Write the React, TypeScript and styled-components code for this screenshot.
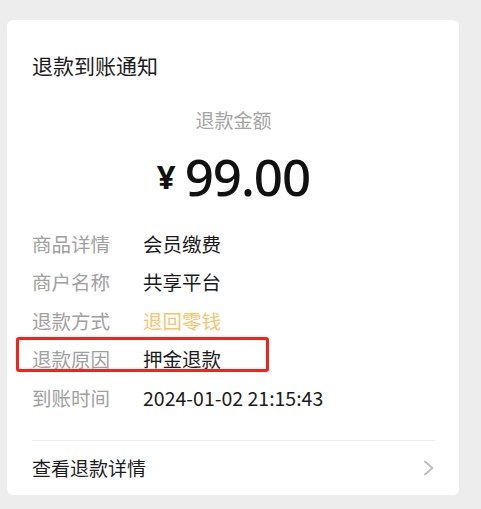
import React from 'react';
import styled, { createGlobalStyle } from 'styled-components';

const GlobalStyle = createGlobalStyle`
  html, body {
    margin: 0;
    padding: 0;
    background: #ededed;
  }
  body {
    font-family: 'Noto Sans CJK SC', 'Noto Sans', sans-serif;
    -webkit-font-smoothing: antialiased;
  }
`;

const Page = styled.div`
  padding: 20px 22px 14px 7px;
`;

const Card = styled.div`
  background: #fff;
  border-radius: 6px;
  height: 475px;
  box-sizing: border-box;
  padding: 30px 24px 0 25px;
  display: flex;
  flex-direction: column;
`;

const Title = styled.div`
  font-size: 21px;
  line-height: 30px;
  color: #1b1b1b;
`;

const AmountLabel = styled.div`
  margin-top: 27px;
  font-size: 19px;
  line-height: 26px;
  color: #a3a3a3;
  text-align: center;
`;

const Amount = styled.div`
  margin-top: 13px;
  height: 60px;
  display: flex;
  align-items: center;
  justify-content: center;
  color: #111;
`;

const Currency = styled.span`
  font-family: 'Noto Sans', sans-serif;
  font-size: 33px;
  font-weight: 700;
  margin-right: 9px;
  margin-top: 0;
`;

const Digits = styled.span`
  font-family: 'Noto Sans', sans-serif;
  font-size: 51px;
  font-weight: 500;
  letter-spacing: -1px;
`;

const Rows = styled.div`
  margin-top: 18px;
  display: flex;
  flex-direction: column;
`;

const Row = styled.div<{ $marked?: boolean }>`
  position: relative;
  display: flex;
  align-items: center;
  height: 38.5px;
  font-size: 19.5px;

  ${({ $marked }) =>
    $marked &&
    `
    &::after {
      content: '';
      position: absolute;
      left: -16px;
      top: -3px;
      width: 253px;
      height: 35px;
      border: 3px solid #f5211a;
      border-radius: 3px;
      box-sizing: border-box;
    }
  `}
`;

const Label = styled.span`
  width: 111px;
  flex-shrink: 0;
  color: #a0a0a0;
`;

const Value = styled.span<{ $accent?: boolean }>`
  color: ${({ $accent }) => ($accent ? '#f7c46d' : '#1b1b1b')};
`;

const Divider = styled.div`
  margin-top: 23px;
  height: 1px;
  background: #efefef;
`;

const Footer = styled.div`
  flex: 1;
  display: flex;
  align-items: center;
  justify-content: space-between;
  font-size: 19px;
  color: #1b1b1b;
`;

const Chevron = styled.svg`
  width: 12px;
  height: 16px;
`;

const rows = [
  { label: '商品详情', value: '会员缴费' },
  { label: '商户名称', value: '共享平台' },
  { label: '退款方式', value: '退回零钱', accent: true },
  { label: '退款原因', value: '押金退款', marked: true },
  { label: '到账时间', value: '2024-01-02 21:15:43' },
];

export default function App() {
  return (
    <Page>
      <GlobalStyle />
      <Card>
        <Title>退款到账通知</Title>
        <AmountLabel>退款金额</AmountLabel>
        <Amount>
          <Currency>¥</Currency>
          <Digits>99.00</Digits>
        </Amount>
        <Rows>
          {rows.map((r) => (
            <Row key={r.label} $marked={r.marked}>
              <Label>{r.label}</Label>
              <Value $accent={r.accent}>{r.value}</Value>
            </Row>
          ))}
        </Rows>
        <Divider />
        <Footer>
          <span>查看退款详情</span>
          <Chevron viewBox="0 0 12 16" fill="none">
            <path d="M2 1.5 L9.5 8 L2 14.5" stroke="#bdbdbd" strokeWidth="1.8" strokeLinecap="round" strokeLinejoin="round" />
          </Chevron>
        </Footer>
      </Card>
    </Page>
  );
}
